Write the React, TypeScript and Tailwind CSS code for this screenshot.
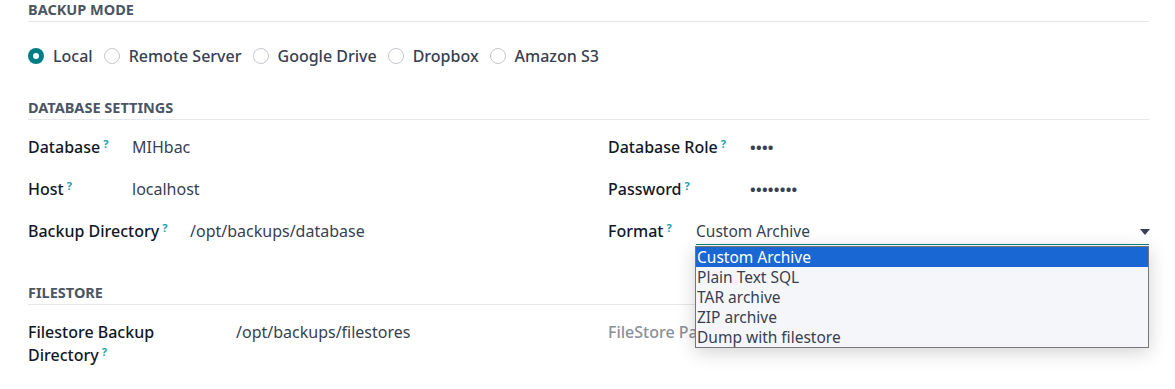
import React from "react";

const Q = () => (
  <sup className="ml-[3px] text-[11px] font-bold text-[#1a9fb0] relative top-[-5px]">?</sup>
);

function Radio({ label, checked }: { label: string; checked?: boolean }) {
  return (
    <div className="flex items-center gap-[9px] mr-[11px]">
      {checked ? (
        <span className="w-[16px] h-[16px] rounded-full bg-[#017e84] flex items-center justify-center">
          <span className="w-[6px] h-[6px] rounded-full bg-white" />
        </span>
      ) : (
        <span className="w-[16px] h-[16px] rounded-full border border-[#c4c7cc] bg-white" />
      )}
      <span className="text-[16px] font-medium text-[#374151]">{label}</span>
    </div>
  );
}

function Header({ children }: { children: React.ReactNode }) {
  return (
    <div className="border-b border-[#e5e7eb] pb-[2px] leading-[19px]">
      <span className="text-[14.5px] font-bold uppercase text-[#4b5563]">{children}</span>
    </div>
  );
}

export default function App() {
  const options = ["Custom Archive", "Plain Text SQL", "TAR archive", "ZIP archive", "Dump with filestore"];
  return (
    <div
      className="w-[1175px] h-[389px] bg-white overflow-hidden pl-[28px] pr-[26px]"
      style={{ fontFamily: '"Noto Sans", "Open Sans", sans-serif' }}
    >
      <Header>Backup Mode</Header>
      <div className="flex items-center h-[24px] mt-[22px]">
        <Radio label="Local" checked />
        <Radio label="Remote Server" />
        <Radio label="Google Drive" />
        <Radio label="Dropbox" />
        <Radio label="Amazon S3" />
      </div>

      <div className="mt-[30px]">
        <Header>Database Settings</Header>
      </div>

      <div className="grid grid-cols-[580px_1fr] mt-[14px] text-[16px]">
        <div className="flex flex-col">
          <div className="flex items-center h-[26px]">
            <div className="w-[104px] font-medium text-[#111827]">Database<Q /></div>
            <div className="text-[#374151]">MIHbac</div>
          </div>
          <div className="flex items-center h-[26px] mt-[16px]">
            <div className="w-[104px] font-medium text-[#111827]">Host<Q /></div>
            <div className="text-[#374151]">localhost</div>
          </div>
          <div className="flex items-center h-[26px] mt-[16px]">
            <div className="w-[162px] font-medium text-[#111827]">Backup Directory<Q /></div>
            <div className="text-[#374151]">/opt/backups/database</div>
          </div>
        </div>
        <div className="flex flex-col">
          <div className="flex items-center h-[26px]">
            <div className="w-[142px] font-medium text-[#111827]">Database Role<Q /></div>
            <div className="text-[#374151] font-bold tracking-[0.3px] text-[15px]">••••</div>
          </div>
          <div className="flex items-center h-[26px] mt-[16px]">
            <div className="w-[142px] font-medium text-[#111827]">Password<Q /></div>
            <div className="text-[#374151] font-bold tracking-[0.3px] text-[15px]">••••••••</div>
          </div>
          <div className="flex items-center h-[26px] mt-[16px]">
            <div className="w-[88px] font-medium text-[#111827]">Format<Q /></div>
            <div className="relative flex-1">
              <div className="flex items-center justify-between border-b border-[#017e84] h-[28px] pt-[2px]">
                <span className="text-[#374151] text-[15.5px]">Custom Archive</span>
                <svg width="10" height="6" viewBox="0 0 10 6" className="mr-[-1px]">
                  <path d="M0 0h10L5 6z" fill="#374151" />
                </svg>
              </div>
              <div className="absolute left-[-1px] right-0 top-[29px] z-10 border border-[#767676] bg-[#f5f6fa] shadow-[0_4px_18px_rgba(0,0,0,0.18)]">
                {options.map((o, i) => (
                  <div
                    key={o}
                    className={
                      "h-[20px] leading-[20px] px-[1px] text-[15.5px] " +
                      (i === 0 ? "bg-[#1967d2] text-white" : "text-[#374151]")
                    }
                  >
                    {o}
                  </div>
                ))}
              </div>
            </div>
          </div>
        </div>
      </div>

      <div className="mt-[39px]">
        <Header>Filestore</Header>
      </div>

      <div className="grid grid-cols-[580px_1fr] mt-[16px] text-[16px]">
        <div className="flex">
          <div className="w-[208px] leading-[23px] font-medium text-[#111827] pr-[60px]">
            Filestore Backup Directory<Q />
          </div>
          <div className="text-[#374151] leading-[23px]">/opt/backups/filestores</div>
        </div>
        <div className="leading-[23px] font-medium text-[#8b9099]">FileStore Path</div>
      </div>
    </div>
  );
}
